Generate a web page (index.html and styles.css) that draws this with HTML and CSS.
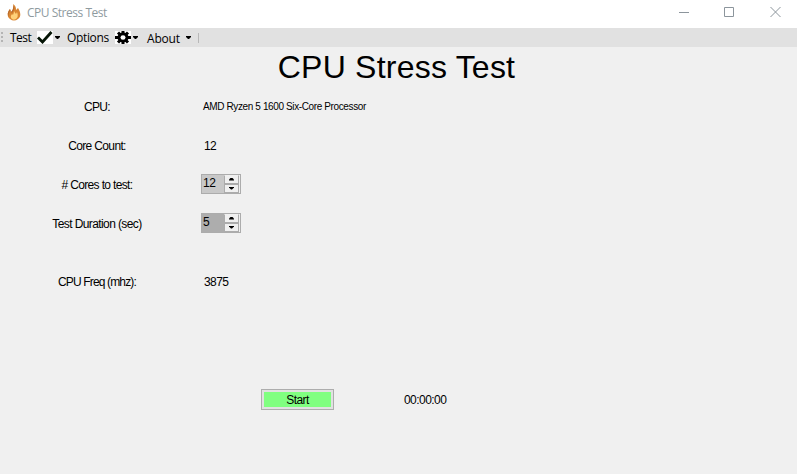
FILE: index.html
```html
<!DOCTYPE html>
<html lang="en">
<head>
<meta charset="utf-8">
<title>CPU Stress Test</title>
<link rel="stylesheet" href="styles.css">
</head>
<body>
<header class="titlebar">
  <svg class="flame" width="14" height="17" viewBox="0 0 14 17"><path fill="#d98632" d="M6 0C9 2 9 4 9 6L11 4C13 7 15 12 11 15Q7 18 3 15C-1 12 1 8 3 5L4 8C6 6 7 3 6 0Z"/><path fill="#b96b2c" d="M6 1Q8 3 7 6L5 9 3 7Q1 10 2 13-1 9 3 5L4 8Q7 5 6 1Z"/><path fill="#ffd179" d="M7 7Q8 9 9 10L10 8Q12 13 9 15 6 17 4 14 3 12 5 10L6 11Q7 9 7 7Z"/></svg>
  <span class="caption">CPU Stress Test</span>
  <svg class="controls" width="104" height="12" viewBox="0 0 104 12" fill="none" stroke="#8c959c"><path d="M1 6.500h10M46.500 1.500h9v9h-9zM92.500 1l10 10M102.500 1l-10 10"/></svg>
</header>
<nav class="toolbar">
  <span class="grip"></span>
  <span class="item test">Test</span>
  <svg class="check" width="16" height="13" viewBox="0 0 16 13"><path fill="#fff" d="M0 0h16v13H0z"/><path fill="none" stroke="#061506" stroke-width="2.800" d="M1 6.500l4.500 4.500L14.500 1"/></svg>
  <span class="arrow"></span>
  <span class="item options">Options</span>
  <svg class="gear" width="16" height="13" viewBox="0 0 16 13"><path fill="#fff" d="M0 0h16v13H0z"/><g stroke="#000" stroke-width="3"><path d="M8 0v13M0 6.500h16M3 1.500l10 10M13 1.500l-10 10"/></g><ellipse cx="8" cy="6.500" rx="5.500" ry="5"/><ellipse cx="8" cy="6.500" rx="2.500" ry="2.200" fill="#fff"/></svg>
  <span class="arrow"></span>
  <span class="item about">About</span>
  <span class="arrow last"></span>
  <span class="separator"></span>
</nav>
<main>
  <h1>CPU Stress Test</h1>
  <div class="form">
    <span class="label cpu">CPU:</span><span class="value model">AMD Ryzen 5 1600 Six-Core Processor</span>
    <span class="label count">Core Count:</span><span class="value">12</span>
    <span class="label cores">#&nbsp;Cores to test:</span>
    <div class="spinner"><span class="number">12</span><span class="steps"><i><b class="up"></b></i><i><b class="down"></b></i></span></div>
    <span class="label duration">Test Duration (sec)</span>
    <div class="spinner dark"><span class="number">5</span><span class="steps"><i><b class="up"></b></i><i><b class="down"></b></i></span></div>
    <span class="label freq">CPU Freq (mhz):</span><span class="value freq-value">3875</span>
  </div>
  <div class="actions"><button class="start">Start</button><span class="timer">00:00:00</span></div>
</main>
</body>
</html>
```
FILE: styles.css
```css
* { box-sizing: border-box; }
body { margin: 0; width: 797px; height: 474px; overflow: hidden; background: #f0f0f0; color: #000; font: 12px/16px "Liberation Sans", Arial, sans-serif; }
.titlebar { height: 28px; background: #fff; display: flex; align-items: center; padding: 0 15px 3px 7px; }
.flame { flex: none; }
.caption { font: 12px/16px "Open Sans", sans-serif; color: #8f9b9f; margin-left: 6px; letter-spacing: -.48px; white-space: nowrap; }
.controls { margin-left: auto; position: relative; top: -1px; }
.toolbar { height: 19px; background: #e1e1e1; display: flex; align-items: center; font: 12px/16px "Open Sans", sans-serif; }
.grip { width: 2px; height: 11px; margin: 0 7px 0 1px; background: repeating-linear-gradient(#b4b4b4 0 2px, transparent 2px 4px); }
.item { white-space: nowrap; padding-top: 1px; }
.test { width: 27px; letter-spacing: -.5px; }
.check, .gear { flex: none; }
.arrow { width: 5px; height: 3px; margin: 0 0 0 2px; background: #000; clip-path: polygon(0 0, 100% 0, 100% 34%, 60% 100%, 40% 100%, 0 34%); }
.options { width: 48px; margin-left: 7px; letter-spacing: -.35px; }
.about { width: 37px; margin-left: 9px; padding-top: 2px; letter-spacing: -.2px; }
.separator { width: 1px; height: 10px; margin-left: 7px; background: #b8b8b8; }
h1 { margin: 0; height: 40px; padding-right: 4px; font-size: 32px; line-height: 40px; font-weight: 400; text-align: center; letter-spacing: .22px; }
.form { display: grid; grid-template-columns: 194px 1fr; grid-template-rows: repeat(4, 39px) 19px 39px; align-items: center; }
.label { text-align: center; white-space: nowrap; letter-spacing: -.6px; }
.cpu { letter-spacing: -.7px; }
.count, .cores { letter-spacing: -.65px; }
.value { padding-left: 10px; letter-spacing: -.6px; }
.model { font-size: 10px; padding-left: 9px; letter-spacing: -.38px; }
.freq, .freq-value { grid-row: 6; }
.freq { letter-spacing: -.85px; }
.spinner { width: 40px; height: 20px; margin: 0 0 2px 7px; border: 1px solid #acacac; background: #c8c8c8; display: flex; justify-content: space-between; }
.dark { background: #adadad; }
.number { padding-left: 1px; letter-spacing: -.4px; }
.steps { width: 16px; display: grid; grid-template-rows: 9px 9px; background: #f0f0f0; padding-right: 1px; }
.steps i { border: 1px solid #acacac; border-top-color: #f0f0f0; display: grid; place-items: center; }
.steps i + i { border-top-color: #acacac; }
.steps b { width: 5px; height: 3px; background: #000; }
.up { clip-path: polygon(40% 0, 60% 0, 100% 66%, 100% 100%, 0 100%, 0 66%); }
.down { clip-path: polygon(0 0, 100% 0, 100% 34%, 60% 100%, 40% 100%, 0 34%); }
.actions { display: flex; align-items: center; margin: 88px 0 0 261px; }
.start { width: 73px; height: 21px; border: 1px solid #adadad; padding: 0; background: #80ff80; box-shadow: inset 0 0 0 2px #e1e1e1; font: inherit; color: #000; letter-spacing: -.6px; }
.timer { margin-left: 70px; letter-spacing: -.55px; }
```
